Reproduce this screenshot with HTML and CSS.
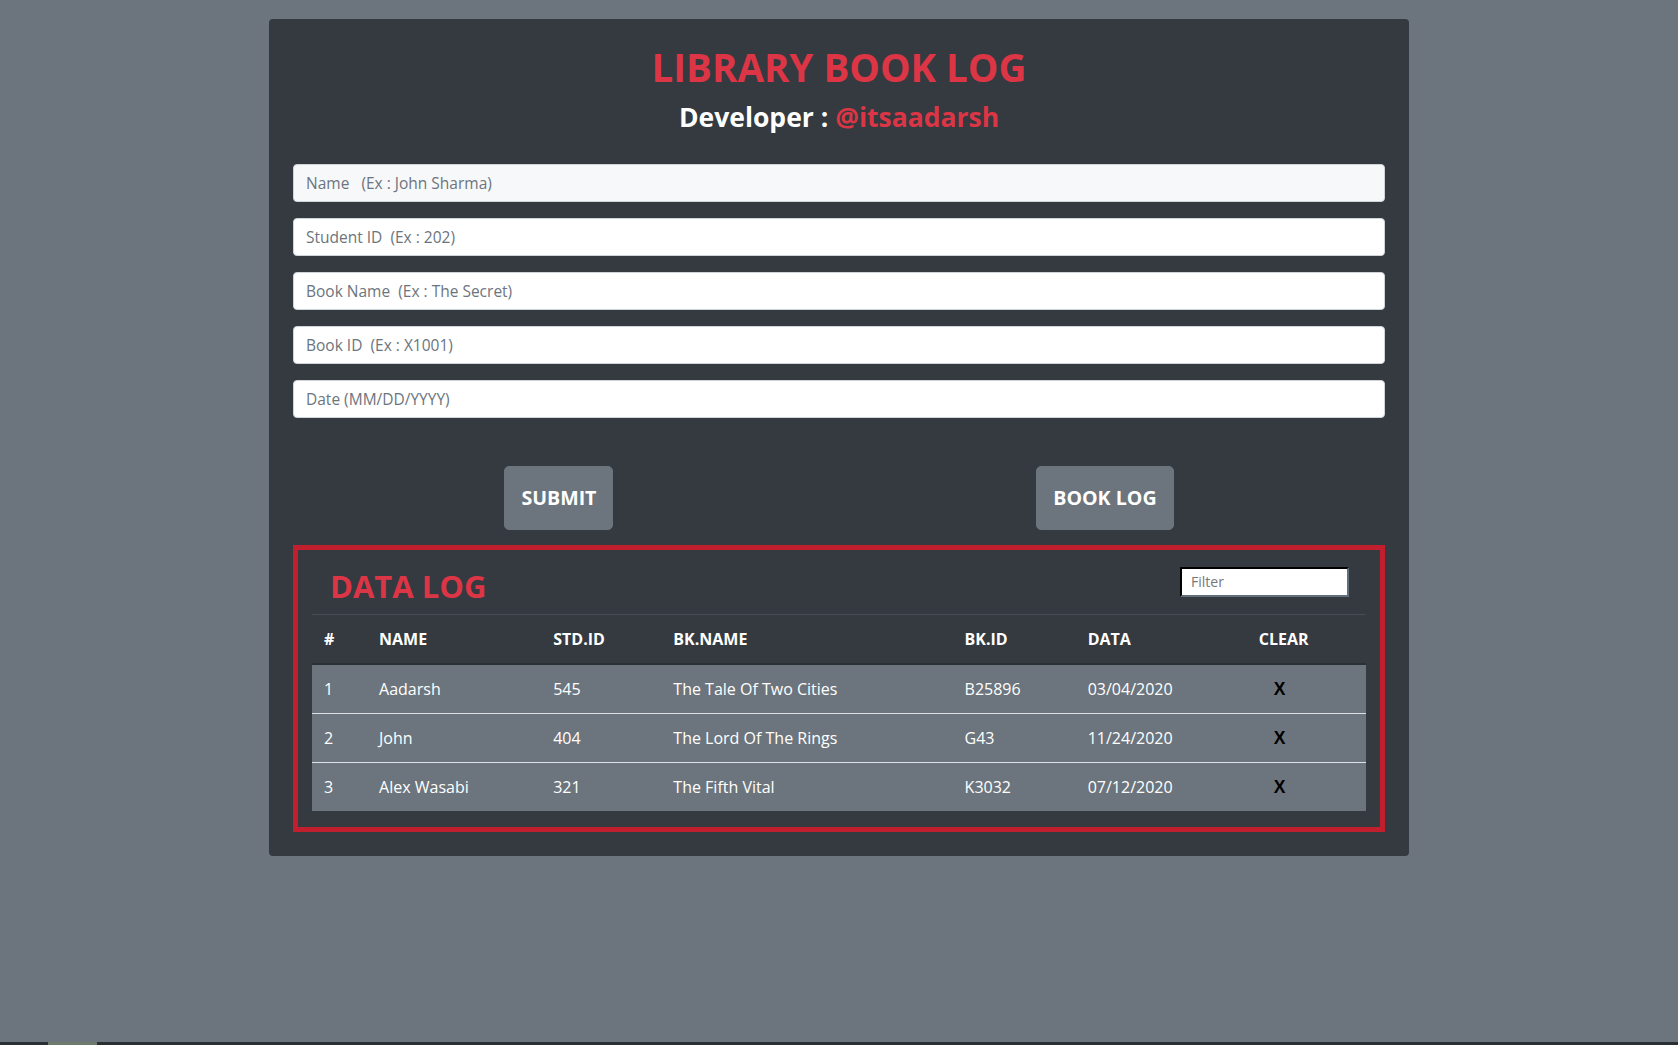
FILE: index.html
```html
<!DOCTYPE html>
<html lang="en">
<head>
<meta charset="utf-8">
<title>Library Book Log</title>
<link rel="stylesheet" href="styles.css">
</head>
<body>
<main class="card">
  <h1 class="title">LIBRARY BOOK LOG</h1>
  <h2 class="dev">Developer : <span class="handle">@itsaadarsh</span></h2>
  <form class="form">
    <input class="field field-first" type="text" placeholder="Name &nbsp; (Ex : John Sharma)">
    <input class="field" type="text" placeholder="Student ID &nbsp;(Ex : 202)">
    <input class="field" type="text" placeholder="Book Name &nbsp;(Ex : The Secret)">
    <input class="field" type="text" placeholder="Book ID &nbsp;(Ex : X1001)">
    <input class="field" type="text" placeholder="Date (MM/DD/YYYY)">
  </form>
  <div class="actions">
    <button class="btn" type="button">SUBMIT</button>
    <button class="btn" type="button">BOOK LOG</button>
  </div>
  <section class="log">
    <div class="log-head">
      <h2 class="log-title">DATA LOG</h2>
      <input class="filter" type="text" placeholder="Filter">
    </div>
    <table class="tbl">
      <colgroup>
        <col class="c1"><col class="c2"><col class="c3"><col class="c4"><col class="c5"><col class="c6"><col class="c7">
      </colgroup>
      <thead>
        <tr><th>#</th><th>NAME</th><th>STD.ID</th><th>BK.NAME</th><th>BK.ID</th><th>DATA</th><th>CLEAR</th></tr>
      </thead>
      <tbody>
        <tr><td>1</td><td>Aadarsh</td><td>545</td><td>The Tale Of Two Cities</td><td>B25896</td><td>03/04/2020</td><td><span class="x">X</span></td></tr>
        <tr><td>2</td><td>John</td><td>404</td><td>The Lord Of The Rings</td><td>G43</td><td>11/24/2020</td><td><span class="x">X</span></td></tr>
        <tr><td>3</td><td>Alex Wasabi</td><td>321</td><td>The Fifth Vital</td><td>K3032</td><td>07/12/2020</td><td><span class="x">X</span></td></tr>
      </tbody>
    </table>
  </section>
</main>
<div class="taskbar"><span class="taskbar-item"></span></div>
</body>
</html>
```
FILE: styles.css
```css
* { box-sizing: border-box; }
html, body { margin: 0; padding: 0; }
body {
  background: #6c757d;
  font-family: "Open Sans", "Noto Sans", sans-serif;
  color: #fff;
  min-height: 1045px;
}
.card {
  width: 1140px;
  margin: 19px auto 0;
  background: #343a40;
  border-radius: 4px;
  padding: 24px 24px 24px;
}
.title {
  margin: 0;
  text-align: center;
  color: #dc3545;
  font-size: 38.5px;
  font-weight: 700;
  line-height: 48px;
}
.dev {
  margin: 8px 0 0;
  text-align: center;
  font-size: 26.5px;
  font-weight: 700;
  line-height: 36px;
  color: #fff;
}
.handle { color: #dc3545; }
.form {
  display: flex;
  flex-direction: column;
  gap: 16px;
  margin-top: 29px;
}
.field {
  display: block;
  width: 100%;
  height: 38px;
  padding: 6px 12px;
  font: inherit;
  font-size: 15.5px;
  color: #495057;
  background: #fff;
  border: 1px solid #ced4da;
  border-radius: 4px;
  outline: none;
}
.field-first { background: #f7f8fa; }
.field::placeholder { color: #6c757d; opacity: 1; }
.actions {
  display: flex;
  justify-content: space-around;
  margin-top: 48px;
}
.btn {
  font: inherit;
  font-size: 19.6px;
  font-weight: 700;
  line-height: 30px;
  color: #fff;
  background: #6c757d;
  border: 1px solid #6c757d;
  border-radius: 5px;
  padding: 16px 16px;
  cursor: pointer;
}
.log {
  margin-top: 15px;
  border: 5px solid #c11f2d;
  padding: 0 14px 16px;
}
.log-head {
  display: flex;
  align-items: center;
  justify-content: space-between;
  padding: 20px 17px 12px 18px;
}
.log-title {
  margin: 0;
  color: #dc3545;
  font-size: 31px;
  font-weight: 700;
  line-height: 32px;
}
.filter {
  width: 169px;
  height: 30px;
  margin-top: -9px;
  padding: 2px 9px;
  font: inherit;
  font-size: 14px;
  border: 2px inset #1f2327;
  border-radius: 0;
  background: #fff;
  outline: none;
}
.filter::placeholder { color: #777; }
.tbl {
  width: 100%;
  table-layout: fixed;
  border-collapse: collapse;
  font-size: 16px;
}
.c1 { width: 55px; }
.c2 { width: 174px; }
.c3 { width: 120px; }
.c4 { width: 291px; }
.c5 { width: 123px; }
.c6 { width: 171px; }
.c7 { width: 119px; }
.tbl th, .tbl td {
  padding: 12px;
  height: 48px;
  line-height: 24px;
  text-align: left;
  white-space: nowrap;
}
.tbl th {
  font-weight: 700;
  border-top: 1px solid #454d55;
  border-bottom: 2px solid #2b3035;
}
.tbl tbody tr { background: #6c757d; }
.tbl td { border-top: 1px solid #dee2e6; font-weight: 400; }
.tbl tbody tr:first-child td { border-top: none; }
.x {
  display: inline-block;
  height: 24px;
  line-height: 24px;
  vertical-align: top;
  margin-left: 15px;
  color: #000;
  font-weight: 700;
  font-family: "Liberation Sans", Arial, sans-serif;
  font-size: 17.5px;
}
.taskbar {
  position: fixed;
  left: 0;
  right: 0;
  bottom: 0;
  height: 3px;
  background: #2a2f33;
}
.taskbar-item {
  position: absolute;
  left: 48px;
  width: 49px;
  top: 0;
  bottom: 0;
  background: #6e7a6c;
}
```
